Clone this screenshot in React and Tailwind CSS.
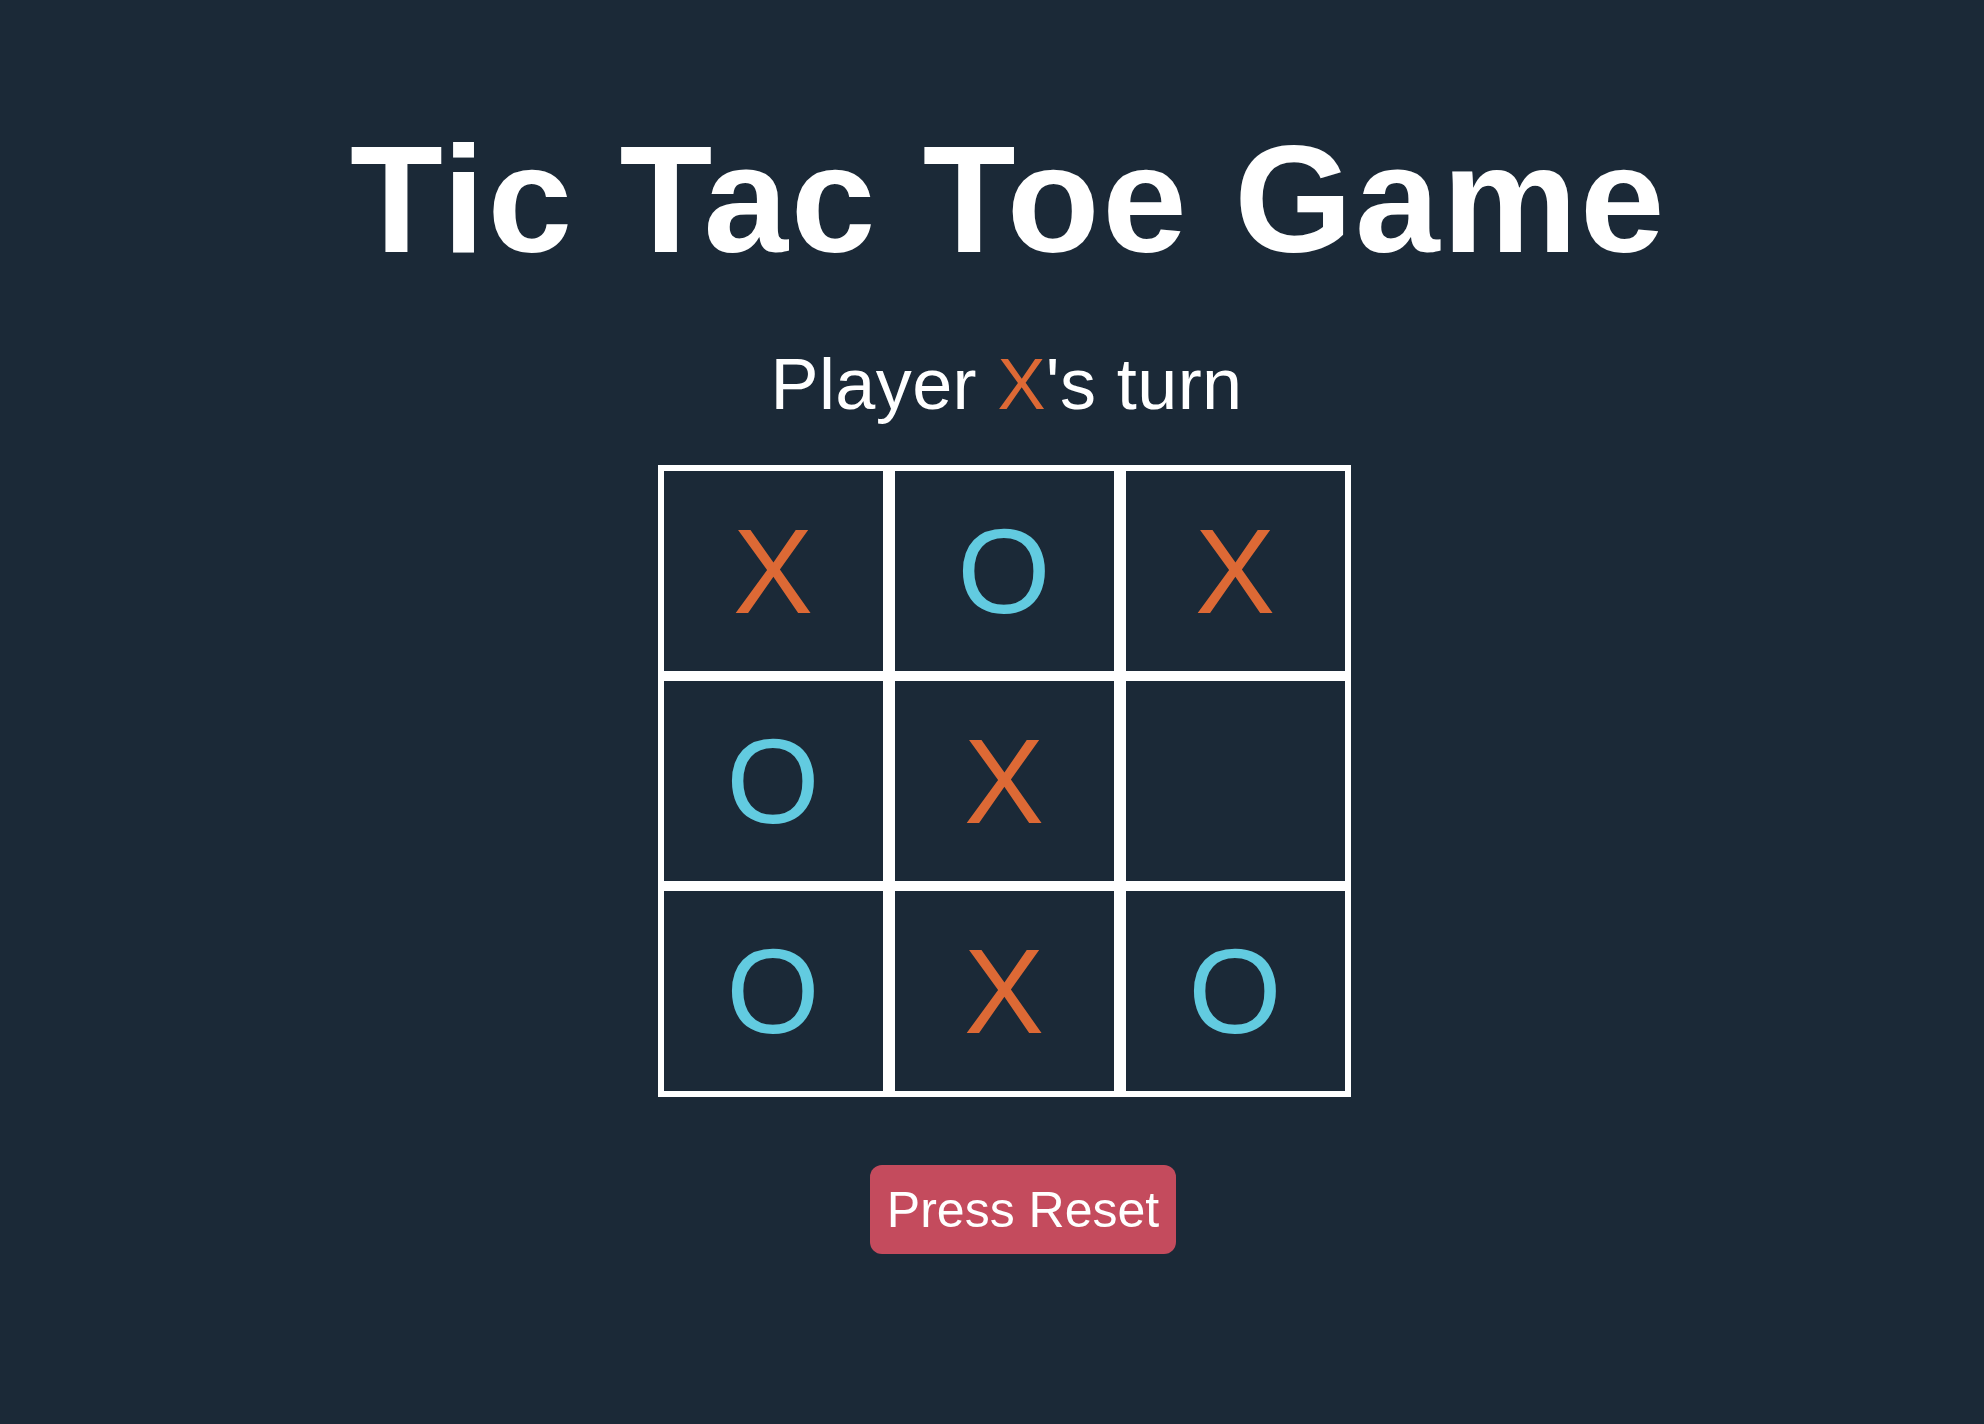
import React from "react";

const board = ["X", "O", "X", "O", "X", "", "O", "X", "O"];

function Cell({ v }) {
  return (
    <div className="w-[219px] h-[200px] bg-[#1b2937] flex items-center justify-center">
      {v && (
        <span
          className={
            "text-[120px] leading-none font-normal " +
            (v === "X" ? "text-[#dd6935]" : "text-[#62cbe0]")
          }
        >
          {v}
        </span>
      )}
    </div>
  );
}

export default function App() {
  return (
    <div
      className="w-full min-h-[1424px] bg-[#1b2937] flex flex-col items-center pl-[24px] pt-[123px] text-white"
      style={{ fontFamily: '"Liberation Sans", Arial, Helvetica, sans-serif' }}
    >
      <h1 className="text-[152px] leading-none font-bold m-0 ml-[9px] tracking-[2.6px]">Tic Tac Toe Game</h1>
      <p className="text-[72px] leading-none font-normal mt-[73px] ml-[5px] tracking-[0.4px]">
        Player <span className="text-[#dd6935]">X</span>'s turn
      </p>
      <div className="mt-[45px] bg-white p-[6px] grid grid-cols-[219px_219px_219px] gap-x-[12px] gap-y-[10px]">
        {board.map((v, i) => (
          <Cell key={i} v={v} />
        ))}
      </div>
      <button className="mt-[68px] ml-[38px] h-[89px] flex items-center bg-[#c44b5d] text-white text-[50px] leading-none px-[17px] rounded-[12px]">
        Press Reset
      </button>
    </div>
  );
}
